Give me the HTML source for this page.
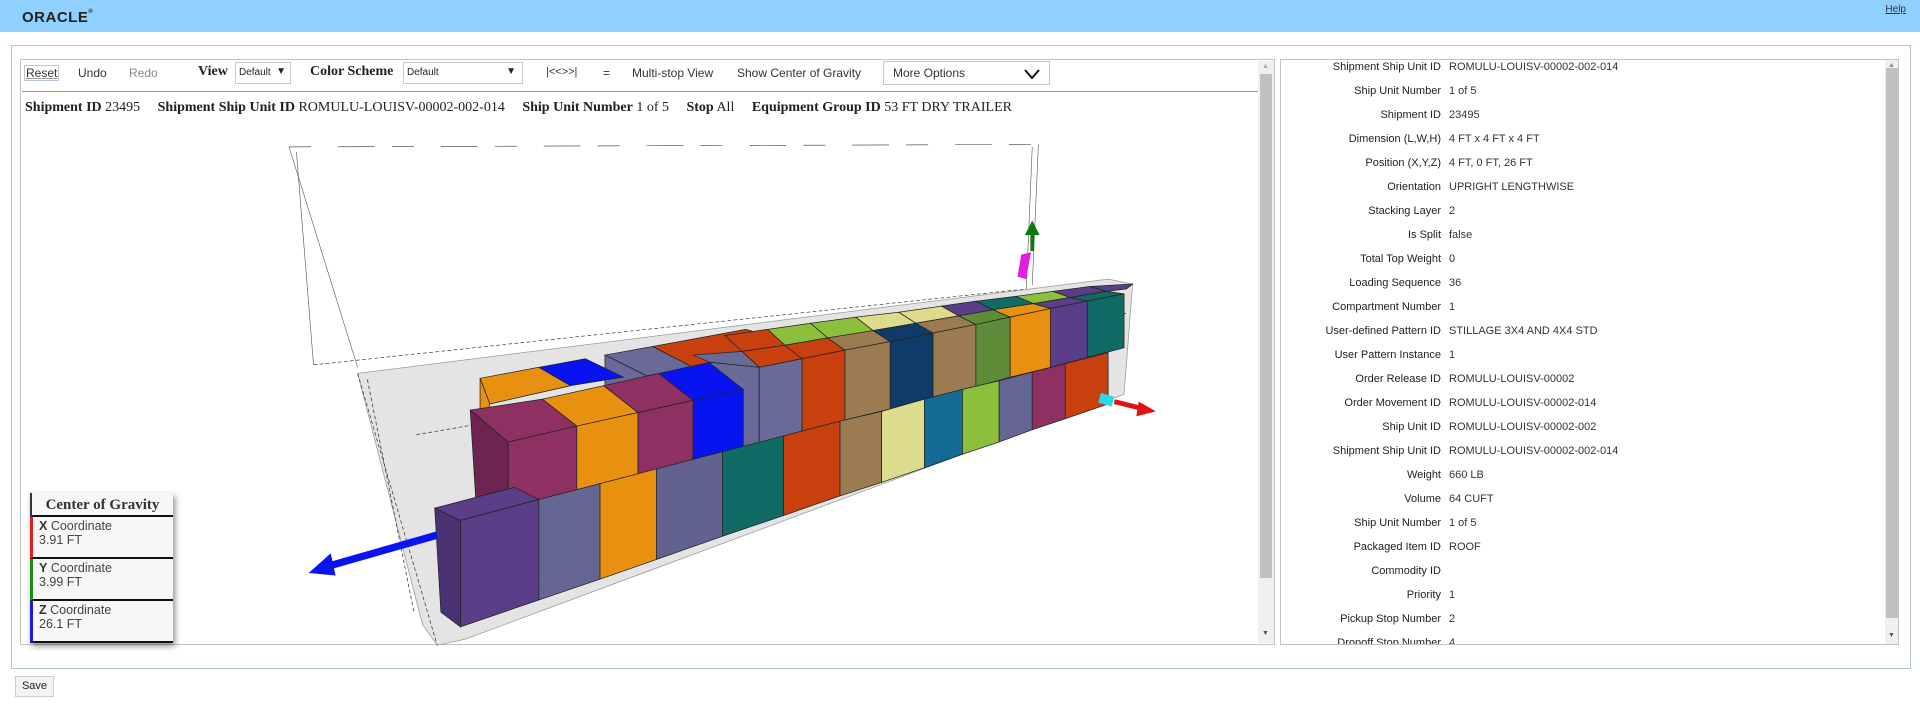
<!DOCTYPE html>
<html><head><meta charset="utf-8"><style>
*{box-sizing:border-box}
body{margin:0;width:1920px;height:704px;overflow:hidden;background:#fff;font-family:"Liberation Sans",Arial,sans-serif;position:relative}
.top{position:absolute;left:0;top:0;width:1920px;height:32px;background:#8fd0ff}
.logo{position:absolute;left:22px;top:9px;font:bold 15px "Liberation Sans",sans-serif;letter-spacing:0.5px;color:#222}
.help{position:absolute;right:14px;top:4px;font-size:10px;color:#333;text-decoration:underline}
.outer{position:absolute;left:11px;top:45px;width:1900px;height:624px;border:1px solid #b4c4cf;background:#fff}
.lp{position:absolute;left:20px;top:59px;width:1255px;height:586px;border:1px solid #c3c3c3;background:#fff}
.rp{position:absolute;left:1280px;top:59px;width:619px;height:586px;border:1px solid #c3c3c3;background:#fff;overflow:hidden}
.sb{position:absolute;background:#f0f0f0}
.thumb{position:absolute;background:#c1c1c1}
.tb{position:absolute;font-size:12px;color:#333;top:66px}
.ser{font-family:"Liberation Serif",serif;font-weight:bold;font-size:14px;color:#222}
.sel{position:absolute;border:1px solid #c8c8c8;background:#fff;font-size:10px;color:#222;padding:4px 3px}
.hdr{position:absolute;left:25px;top:100px;font-family:"Liberation Serif",serif;font-size:14px;color:#222;white-space:nowrap}
.hdr b{margin-left:14px}.hdr b:first-child{margin-left:0}
.row{position:absolute;left:0;width:600px;font-size:11px;color:#222;height:14px;line-height:14px}
.row .l{position:absolute;right:440px;text-align:right;white-space:nowrap;color:#222}
.row .v{position:absolute;left:168px;white-space:nowrap;color:#333}
.cog{position:absolute;left:30px;top:493px;width:143px;height:150px;background:#f7f7f7;box-shadow:2px 3px 6px rgba(0,0,0,.45);border-left:2px solid #333}
.cog .h{height:24px;border-bottom:2px solid #111;text-align:center;font:bold 15px "Liberation Serif",serif;color:#333;line-height:24px}
.cog .r{height:42px;border-bottom:2px solid #111;padding:2px 0 0 6px;font-size:12.5px;color:#444;line-height:14px;margin-left:-2px;border-left:3px solid}
.save{position:absolute;left:15px;top:676px;width:39px;height:21px;border:1px solid #ccc;background:#f3f3f3;font-size:11px;text-align:center;line-height:19px;color:#222}
</style></head><body>
<div class="top"><div class="logo">ORACLE<span style="font-size:6px;vertical-align:top">®</span></div><div class="help">Help</div></div>
<div class="outer"></div>
<div class="lp"></div>
<div class="rp">
<div class="row" style="top:0px"><span class="l">Shipment Ship Unit ID</span><span class="v">ROMULU-LOUISV-00002-002-014</span></div>
<div class="row" style="top:24px"><span class="l">Ship Unit Number</span><span class="v">1 of 5</span></div>
<div class="row" style="top:48px"><span class="l">Shipment ID</span><span class="v">23495</span></div>
<div class="row" style="top:72px"><span class="l">Dimension (L,W,H)</span><span class="v">4 FT x 4 FT x 4 FT</span></div>
<div class="row" style="top:96px"><span class="l">Position (X,Y,Z)</span><span class="v">4 FT, 0 FT, 26 FT</span></div>
<div class="row" style="top:120px"><span class="l">Orientation</span><span class="v">UPRIGHT LENGTHWISE</span></div>
<div class="row" style="top:144px"><span class="l">Stacking Layer</span><span class="v">2</span></div>
<div class="row" style="top:168px"><span class="l">Is Split</span><span class="v">false</span></div>
<div class="row" style="top:192px"><span class="l">Total Top Weight</span><span class="v">0</span></div>
<div class="row" style="top:216px"><span class="l">Loading Sequence</span><span class="v">36</span></div>
<div class="row" style="top:240px"><span class="l">Compartment Number</span><span class="v">1</span></div>
<div class="row" style="top:264px"><span class="l">User-defined Pattern ID</span><span class="v">STILLAGE 3X4 AND 4X4 STD</span></div>
<div class="row" style="top:288px"><span class="l">User Pattern Instance</span><span class="v">1</span></div>
<div class="row" style="top:312px"><span class="l">Order Release ID</span><span class="v">ROMULU-LOUISV-00002</span></div>
<div class="row" style="top:336px"><span class="l">Order Movement ID</span><span class="v">ROMULU-LOUISV-00002-014</span></div>
<div class="row" style="top:360px"><span class="l">Ship Unit ID</span><span class="v">ROMULU-LOUISV-00002-002</span></div>
<div class="row" style="top:384px"><span class="l">Shipment Ship Unit ID</span><span class="v">ROMULU-LOUISV-00002-002-014</span></div>
<div class="row" style="top:408px"><span class="l">Weight</span><span class="v">660 LB</span></div>
<div class="row" style="top:432px"><span class="l">Volume</span><span class="v">64 CUFT</span></div>
<div class="row" style="top:456px"><span class="l">Ship Unit Number</span><span class="v">1 of 5</span></div>
<div class="row" style="top:480px"><span class="l">Packaged Item ID</span><span class="v">ROOF</span></div>
<div class="row" style="top:504px"><span class="l">Commodity ID</span><span class="v"></span></div>
<div class="row" style="top:528px"><span class="l">Priority</span><span class="v">1</span></div>
<div class="row" style="top:552px"><span class="l">Pickup Stop Number</span><span class="v">2</span></div>
<div class="row" style="top:576px"><span class="l">Dropoff Stop Number</span><span class="v">4</span></div>
<div class="sb" style="left:604px;top:0;width:14px;height:584px"></div>
<div class="thumb" style="left:605px;top:8px;width:12px;height:550px"></div>
<div style="position:absolute;left:607px;top:2px;font-size:7px;color:#888">▲</div>
<div style="position:absolute;left:607px;top:572px;font-size:7px;color:#555">▼</div>
</div>
<div class="sb" style="left:1258px;top:61px;width:16px;height:582px"></div>
<div class="thumb" style="left:1260px;top:74px;width:12px;height:504px"></div>
<div style="position:absolute;left:1262px;top:630px;font-size:7px;color:#555">▼</div>
<div style="position:absolute;left:1262px;top:63px;font-size:7px;color:#aaa">▲</div>
<div style="position:absolute;left:22px;top:91px;width:1236px;height:1px;background:#999"></div>
<div class="tb" style="left:24px;top:65px;border:1px solid #b9c9d9;padding:0 1px;text-decoration:underline;text-decoration-color:#999">Reset</div>
<div class="tb" style="left:78px">Undo</div>
<div class="tb" style="left:129px;color:#888">Redo</div>
<div class="tb ser" style="left:198px;top:64px">View</div>
<div class="sel" style="left:235px;top:62px;width:56px;height:22px">Default <span style="position:absolute;right:4px;top:3px">▼</span></div>
<div class="tb ser" style="left:310px;top:64px">Color Scheme</div>
<div class="sel" style="left:403px;top:62px;width:120px;height:22px">Default<span style="position:absolute;right:6px;top:3px">▼</span></div>
<div class="tb" style="left:546px;font-size:11px">|&lt;&lt;&gt;&gt;|</div>
<div class="tb" style="left:603px">=</div>
<div class="tb" style="left:632px">Multi-stop View</div>
<div class="tb" style="left:737px">Show Center of Gravity</div>
<div class="sel" style="left:883px;top:61px;width:167px;height:24px;font-size:12px;padding:4px 9px;color:#333">More Options
<svg style="position:absolute;right:8px;top:6px" width="18" height="12"><path d="M2 2 L9 10 L16 2" fill="none" stroke="#111" stroke-width="2"/></svg></div>
<div class="hdr"><b>Shipment ID</b> 23495 <b>Shipment Ship Unit ID</b> ROMULU-LOUISV-00002-002-014 <b>Ship Unit Number</b> 1 of 5 <b>Stop</b> All <b>Equipment Group ID</b> 53 FT DRY TRAILER</div>

<svg style="position:absolute;left:0;top:0" width="1920" height="704" viewBox="0 0 1568 575">
<g stroke="#555" stroke-width="0.5" fill="none">
<path d="M236 120 L848 118" stroke="#333" stroke-dasharray="18 22 30 14"/>
<path d="M236 120 L292 300 M242 124 L256 298 M848 118 L843 233 M843 120 L838 240"/>
<path d="M256 298 L838 236" stroke="#222" stroke-dasharray="3 2"/>
</g>
<polygon points="292,305 905,228 925,232 918,322 380,522 357,527 345,510" fill="#e4e4e4" stroke="#999" stroke-width="0.6"/>
<path d="M292 305 L357 527 M340 355 L920 256 M300 310 L338 500" stroke="#333" stroke-width="0.6" fill="none" stroke-dasharray="3 2"/>
<g stroke="#222" stroke-width="0.6">
<!-- back left boxes -->
<polygon points="494,290 533,283 566,300 528,307" fill="#6a6a98"/>
<polygon points="533,283 609,269 645,279 566,300" fill="#c8400e"/>
<polygon points="494,290 528,307 528,360 494,360" fill="#6a6a98"/>
<polygon points="392,309 440,300 466,315 400,330" fill="#e8900f"/>
<polygon points="392,309 400,330 392,360" fill="#e8900f"/>
<polygon points="440,300 478,293 509,308 466,315" fill="#0814f0"/>
<!-- back row tiles -->
<polygon points="606,287 641,282 627,269 592,274" fill="#c8400e"/>
<polygon points="641,282 676,276 662,264 627,269" fill="#8cbf3c"/>
<polygon points="676,276 713,270 699,259 662,264" fill="#8cbf3c"/>
<polygon points="713,270 748,264 734,255 699,259" fill="#dcdc8c"/>
<polygon points="748,264 783,258 769,250 734,255" fill="#dcdc8c"/>
<polygon points="783,258 811,253 797,246 769,250" fill="#5a3e87"/>
<polygon points="811,253 844,248 830,242 797,246" fill="#0f6b63"/>
<polygon points="844,248 874,243 860,238 830,242" fill="#8cbf3c"/>
<polygon points="874,243 904,238 890,234 860,238" fill="#5a3e87"/>
<polygon points="904,238 920,236 925,232 890,234" fill="#5a3e87"/>
<!-- front row tiles -->
<polygon points="580,296 620,300 606,287 566,290" fill="#6a6a98"/>
<polygon points="620,300 655,293 641,282 606,287" fill="#c8400e"/>
<polygon points="655,293 690,286 676,276 641,282" fill="#c8400e"/>
<polygon points="690,286 727,279 713,270 676,276" fill="#9a7b52"/>
<polygon points="727,279 762,272 748,264 713,270" fill="#0f3b68"/>
<polygon points="762,272 797,265 783,258 748,264" fill="#9a7b52"/>
<polygon points="797,265 825,259 811,253 783,258" fill="#5f8c38"/>
<polygon points="825,259 858,252 844,248 811,253" fill="#e8900f"/>
<polygon points="858,252 888,246 874,243 844,248" fill="#5a3e87"/>
<polygon points="888,246 918,240 904,238 874,243" fill="#0f6b63"/>
<!-- upper right fronts -->
<polygon points="580,296 620,300 620,362 580,372" fill="#6a6a98"/>
<polygon points="620,300 655,293 655,352 620,362" fill="#6a6a98"/>
<polygon points="655,293 690,286 690,343 655,352" fill="#c8400e"/>
<polygon points="690,286 727,279 727,334 690,343" fill="#9a7b52"/>
<polygon points="727,279 762,272 762,325 727,334" fill="#0f3b68"/>
<polygon points="762,272 797,265 797,316 762,325" fill="#9a7b52"/>
<polygon points="797,265 825,259 825,308 797,316" fill="#5f8c38"/>
<polygon points="825,259 858,252 858,300 825,308" fill="#e8900f"/>
<polygon points="858,252 888,246 888,292 858,300" fill="#5a3e87"/>
<polygon points="888,246 918,240 918,284 888,292" fill="#0f6b63"/>
<!-- front upper stack tops -->
<polygon points="415,361 471,348 443,326 384,335" fill="#8e3062"/>
<polygon points="471,348 521,337 493,315 443,326" fill="#e8900f"/>
<polygon points="521,337 566,327 538,305 493,315" fill="#8e3062"/>
<polygon points="566,327 607,318 579,296 538,305" fill="#0814f0"/>
<!-- front upper stack fronts -->
<polygon points="384,335 415,361 415,447 390,432" fill="#6e2450"/>
<polygon points="415,361 471,348 471,432 415,447" fill="#8e3062"/>
<polygon points="471,348 521,337 521,419 471,432" fill="#e8900f"/>
<polygon points="521,337 566,327 566,408 521,419" fill="#8e3062"/>
<polygon points="566,327 607,318 607,397 566,408" fill="#0814f0"/>
<!-- bottom row -->
<polygon points="355,415 376,425 376,512 360,500" fill="#4a3272"/>
<polygon points="355,415 376,425 440,408 420,398" fill="#5a3e87"/>
<polygon points="376,425 440,408 440,490 376,512" fill="#5a3e87"/>
<polygon points="440,408 490,395 490,473 440,490" fill="#666694"/>
<polygon points="490,395 536,383 536,457 490,473" fill="#e8900f"/>
<polygon points="536,383 590,369 590,438 536,457" fill="#62628f"/>
<polygon points="590,369 640,356 640,421 590,438" fill="#0f6b63"/>
<polygon points="640,356 686,344 686,405 640,421" fill="#c8400e"/>
<polygon points="686,344 720,336 720,394 686,405" fill="#9a7b52"/>
<polygon points="720,336 755,326 755,382 720,394" fill="#dcdc8c"/>
<polygon points="755,326 786,318 786,371 755,382" fill="#126c95"/>
<polygon points="786,318 816,311 816,361 786,371" fill="#8cbf3c"/>
<polygon points="816,311 843,304 843,351 816,361" fill="#666694"/>
<polygon points="843,304 870,297 870,342 843,351" fill="#8e3062"/>
<polygon points="870,297 905,288 905,330 870,342" fill="#c8400e"/>
</g>
<path d="M357 437 L266 463" stroke="#0a14f0" stroke-width="6"/>
<polygon points="252,468 270,452 274,470" fill="#0a14f0"/>
<path d="M843 205 L843 190" stroke="#0a7a0a" stroke-width="3"/>
<polygon points="843,180 837,192 849,192" fill="#0a7a0a"/>
<polygon points="834,208 842,206 838,228 831,226" fill="#e01ee0"/>
<polygon points="899,321 910,324 908,332 897,329" fill="#2fd8e8"/>
<path d="M910 328 L934 334" stroke="#e01010" stroke-width="4"/>
<polygon points="944,336 930,328 928,340" fill="#e01010"/>
</svg>

<div class="cog">
<div class="h">Center of Gravity</div>
<div class="r" style="border-left-color:#e02020"><b style="color:#333">X</b> Coordinate<br>3.91 FT</div>
<div class="r" style="border-left-color:#1a8a1a"><b style="color:#333">Y</b> Coordinate<br>3.99 FT</div>
<div class="r" style="border-left-color:#1a1ae0;border-bottom:2px solid #111"><b style="color:#333">Z</b> Coordinate<br>26.1 FT</div>
</div>
<div class="save">Save</div>
</body></html>
